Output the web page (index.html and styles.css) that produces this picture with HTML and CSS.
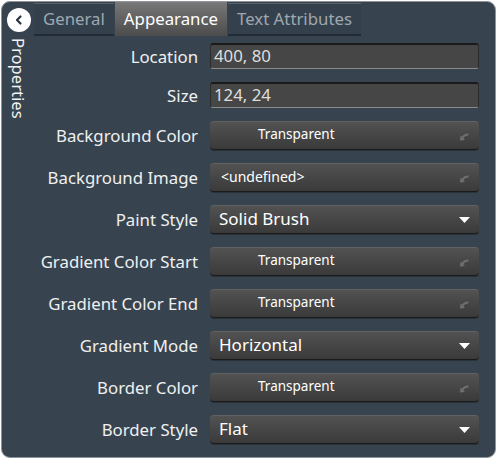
FILE: index.html
```html
<!DOCTYPE html>
<html>
<head>
<meta charset="utf-8">
<link rel="stylesheet" href="styles.css">
</head>
<body>
<div class="panel">
  <div class="side">
    <button class="collapse" aria-label="Collapse">
      <svg width="12" height="12" viewBox="0 0 12 12"><path d="M7.5 2.5 L4 6 L7.5 9.5" fill="none" stroke="#2b3540" stroke-width="2.2" stroke-linecap="round" stroke-linejoin="round"/></svg>
    </button>
    <div class="side-title">Properties</div>
  </div>
  <div class="main">
    <div class="tabs">
      <div class="tab">General</div>
      <div class="tab active">Appearance</div>
      <div class="tab">Text Attributes</div>
    </div>
    <div class="form">
      <label class="lbl">Location</label>
      <div class="input">400, 80</div>

      <label class="lbl">Size</label>
      <div class="input">124, 24</div>

      <label class="lbl">Background Color</label>
      <div class="btn color"><span>Transparent</span><svg class="reset" width="9" height="9" viewBox="0 0 9 9"><path d="M2.5 6 Q4 2.5 8.5 2.5" fill="none" stroke="#6f6f6f" stroke-width="2"/><polygon points="0,8.5 0.5,3.5 5,8" fill="#6f6f6f"/></svg></div>

      <label class="lbl">Background Image</label>
      <div class="btn image"><span>&lt;undefined&gt;</span><svg class="reset" width="9" height="9" viewBox="0 0 9 9"><path d="M2.5 6 Q4 2.5 8.5 2.5" fill="none" stroke="#6f6f6f" stroke-width="2"/><polygon points="0,8.5 0.5,3.5 5,8" fill="#6f6f6f"/></svg></div>

      <label class="lbl">Paint Style</label>
      <div class="btn select"><span>Solid Brush</span><svg class="arrow" width="11" height="6" viewBox="0 0 11 6"><polygon points="0,0 11,0 5.5,6" fill="#ffffff"/></svg></div>

      <label class="lbl">Gradient Color Start</label>
      <div class="btn color"><span>Transparent</span><svg class="reset" width="9" height="9" viewBox="0 0 9 9"><path d="M2.5 6 Q4 2.5 8.5 2.5" fill="none" stroke="#6f6f6f" stroke-width="2"/><polygon points="0,8.5 0.5,3.5 5,8" fill="#6f6f6f"/></svg></div>

      <label class="lbl">Gradient Color End</label>
      <div class="btn color"><span>Transparent</span><svg class="reset" width="9" height="9" viewBox="0 0 9 9"><path d="M2.5 6 Q4 2.5 8.5 2.5" fill="none" stroke="#6f6f6f" stroke-width="2"/><polygon points="0,8.5 0.5,3.5 5,8" fill="#6f6f6f"/></svg></div>

      <label class="lbl">Gradient Mode</label>
      <div class="btn select"><span>Horizontal</span><svg class="arrow" width="11" height="6" viewBox="0 0 11 6"><polygon points="0,0 11,0 5.5,6" fill="#ffffff"/></svg></div>

      <label class="lbl">Border Color</label>
      <div class="btn color"><span>Transparent</span><svg class="reset" width="9" height="9" viewBox="0 0 9 9"><path d="M2.5 6 Q4 2.5 8.5 2.5" fill="none" stroke="#6f6f6f" stroke-width="2"/><polygon points="0,8.5 0.5,3.5 5,8" fill="#6f6f6f"/></svg></div>

      <label class="lbl">Border Style</label>
      <div class="btn select"><span>Flat</span><svg class="arrow" width="11" height="6" viewBox="0 0 11 6"><polygon points="0,0 11,0 5.5,6" fill="#ffffff"/></svg></div>
    </div>
  </div>
</div>
</body>
</html>
```

FILE: styles.css
```css
html, body {
  margin: 0;
  padding: 0;
  background: #ffffff;
}

body {
  font-family: "Noto Sans", "Open Sans", sans-serif;
}

.panel {
  box-sizing: border-box;
  width: 495px;
  height: 457px;
  margin: 1px;
  border: 1px solid #8e9399;
  border-radius: 9px;
  background: #37444f;
  display: flex;
  overflow: hidden;
}

.side {
  width: 32px;
  flex: none;
  display: flex;
  flex-direction: column;
  align-items: center;
  padding-top: 6px;
}

.collapse {
  width: 24px;
  height: 24px;
  border-radius: 50%;
  border: none;
  background: #ffffff;
  padding: 0;
  margin-left: 2px;
  display: flex;
  align-items: center;
  justify-content: center;
}

.side-title {
  writing-mode: vertical-rl;
  color: #f2f2f2;
  font-size: 16.6px;
  line-height: 16px;
  margin-top: 6px;
}

.main {
  flex: 1;
  display: flex;
  flex-direction: column;
}

.tabs {
  display: flex;
  height: 34px;
  gap: 1px;
}

.tab {
  box-sizing: border-box;
  height: 33px;
  margin-top: 1px;
  padding: 0 9px 2px;
  display: flex;
  align-items: center;
  font-size: 16.8px;
  color: #9ea8b1;
  background: #34414c;
  border-top: 1px solid #56616b;
  border-bottom: 2px solid #222b33;
}

.tab.active {
  height: 34px;
  margin-top: 0;
  color: #ffffff;
  background: linear-gradient(#767676, #4c4c4c);
  border-top: 1px solid #7d7d7d;
  border-bottom: none;
}

.form {
  display: grid;
  grid-template-columns: 164px 269px;
  column-gap: 12px;
  row-gap: 13px;
  align-items: center;
  padding-top: 7px;
}

.lbl {
  text-align: right;
  color: #f0f0f0;
  font-size: 16.8px;
  white-space: nowrap;
}

.input {
  box-sizing: border-box;
  height: 26px;
  background: #464646;
  border-radius: 3px;
  border-top: 2px solid #1b1b1b;
  border-bottom: 1px solid #8a8a8a;
  border-left: 1px solid #2c2c2c;
  border-right: 1px solid #2c2c2c;
  color: #dedede;
  font-size: 16.8px;
  line-height: 22px;
  padding-left: 3px;
}

.btn {
  box-sizing: border-box;
  height: 29px;
  display: flex;
  align-items: center;
  justify-content: space-between;
  background: linear-gradient(#525252, #3a3a3a);
  border-radius: 4px;
  border-top: 1px solid #626262;
  border-bottom: 1px solid #1a1a1a;
  box-shadow: 0 1px 0 #2a3238;
  color: #ffffff;
}

.btn.color {
  padding: 0 10px 0 48px;
  font-size: 13.5px;
}

.btn.image {
  padding: 0 10px 0 11px;
  font-size: 14px;
}

.btn.select {
  padding: 0 9px 0 9px;
  font-size: 17px;
}

.btn span {
  line-height: 1;
}

.btn.color span,
.btn.image span {
  margin-top: -2px;
}

.btn.select span {
  margin-top: -3px;
}

.reset {
  flex: none;
  margin-top: 1px;
}

.arrow {
  flex: none;
}
```
